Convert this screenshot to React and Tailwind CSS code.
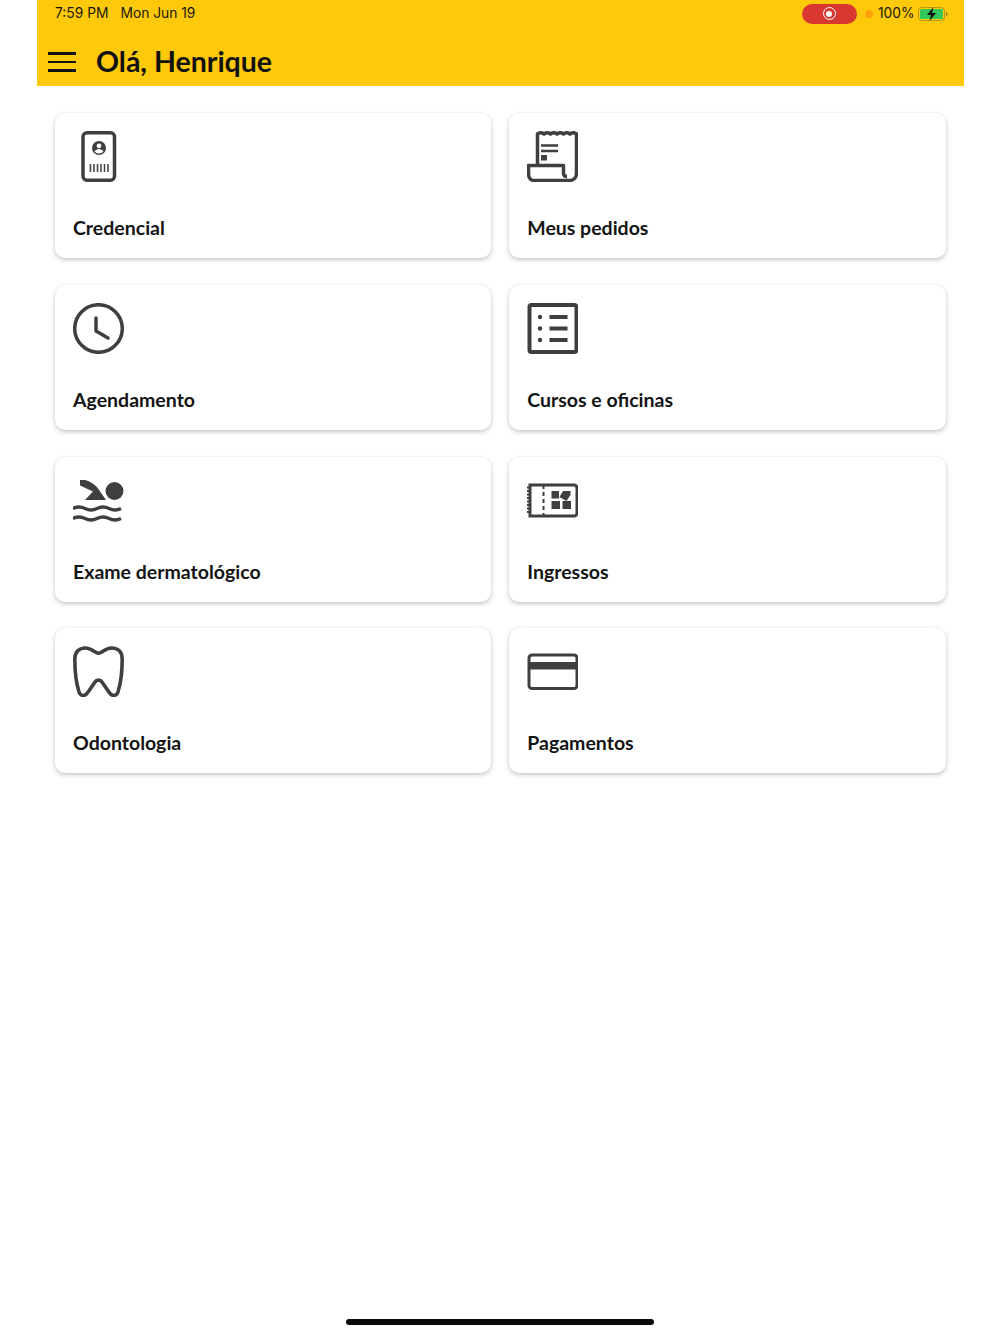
const dark = "#3f3f3f";

const Credencial = () => (
  <svg width="51" height="51" viewBox="0 0 51 51" fill="none">
    <rect x="10" y="1.750" width="31.500" height="47.500" rx="4" stroke={dark} strokeWidth="3.500" />
    <circle cx="26" cy="17" r="7" fill={dark} />
    <circle cx="26" cy="14.800" r="2.400" fill="#fff" />
    <path d="M21.500 20.800c1-2 2.600-2.800 4.500-2.800s3.500 .8 4.500 2.800a7 7 0 0 1-9 0z" fill="#fff" />
    <path d="M17.500 33v8M21 33v8M24.500 33v8M28 33v8M31.500 33v8M35 33v8" stroke={dark} strokeWidth="1.500" />
  </svg>
);

const Pedidos = () => (
  <svg width="51" height="51" viewBox="0 0 51 51" fill="none">
    <path d="M10.500 33V3q3.250-2.500 6.500 0q3.250-2.500 6.500 0q3.250-2.500 6.500 0q3.250-2.500 6.500 0q3.250-2.500 6.500 0q3.250-2.500 6.500 0V42c0 5-3 7.500-7 7.500H7c-4 0-5.500-3.500-5.500-7V34.500H36.500V42c0 2 1 3.500 3.500 3.500" stroke={dark} strokeWidth="3.500" strokeLinejoin="round" />
    <path d="M14 14.500H31M14 20H31" stroke={dark} strokeWidth="2.500" />
    <rect x="14" y="24" width="6" height="5.500" fill={dark} />
  </svg>
);

const Clock = () => (
  <svg width="51" height="51" viewBox="0 0 51 51" fill="none">
    <circle cx="25.500" cy="25.500" r="23.800" stroke={dark} strokeWidth="3.500" />
    <path d="M23 15V28L35 35" stroke={dark} strokeWidth="3.500" strokeLinecap="round" strokeLinejoin="round" />
  </svg>
);

const ListBox = () => (
  <svg width="51" height="51" viewBox="0 0 51 51" fill="none">
    <rect x="2.500" y="2" width="47" height="47" rx="2" stroke={dark} strokeWidth="4" />
    <circle cx="13" cy="14" r="2.200" fill={dark} />
    <circle cx="13" cy="25.500" r="2.200" fill={dark} />
    <circle cx="13" cy="37" r="2.200" fill={dark} />
    <path d="M22.500 14H40.500M22.500 25.500H40.500M22.500 37H40.500" stroke={dark} strokeWidth="4" />
  </svg>
);

const Swim = () => (
  <svg width="51" height="51" viewBox="0 0 51 51" fill="none">
    <path d="M7 5H12Q20 7 25 13.500L33 25H12L20 16.500L7 10.500Z" fill={dark} />
    <circle cx="41.500" cy="16" r="9" fill={dark} />
    <path d="M0 33.500c4-2 8-2 12 0s8 2 12 0 8-2 12 0 8 2 12 0M0 43.500c4-2 8-2 12 0s8 2 12 0 8-2 12 0 8 2 12 0" stroke={dark} strokeWidth="3.500" />
  </svg>
);

const Ticket = () => (
  <svg width="51" height="51" viewBox="0 0 51 51" fill="none">
    <path d="M3 10H47a3 3 0 0 1 3 3V38a3 3 0 0 1-3 3H3Z" stroke={dark} strokeWidth="3" />
    <path d="M0 12.500H3M0 16H3M0 19.500H3M0 23H3M0 26.500H3M0 30H3M0 33.500H3M0 37H3" stroke={dark} strokeWidth="1.800" />
    <path d="M16.500 10V41" stroke={dark} strokeWidth="2" strokeDasharray="4 3" />
    <rect x="24.500" y="16" width="7.500" height="7.500" fill={dark} />
    <path d="M36 16H43.500V20L39.500 26L32.500 22Z" fill={dark} />
    <rect x="24.500" y="26" width="8.500" height="8" fill={dark} />
    <rect x="35.500" y="26" width="8.500" height="8" fill={dark} />
  </svg>
);

const Tooth = () => (
  <svg width="51" height="51" viewBox="0 0 51 51" fill="none">
    <path d="M25.500 7.300C22 7.300 19 2 12.500 2 5.500 2 1.800 6.500 1.800 13 1.800 23 3.500 38 6 46c.8 2.800 2.700 3.500 4.300 3.500 2.200 0 3.500-1.500 5-3.800L22 36c1.500-2.500 5.500-2.500 7 0l6.700 9.700c1.500 2.300 2.800 3.800 5 3.800 1.600 0 3.500-.7 4.300-3.500 2.500-8 4.200-23 4.200-33 0-6.500-3.700-11-10.700-11C32 2 29 7.300 25.500 7.300Z" stroke={dark} strokeWidth="3.600" />
  </svg>
);

const CardIcon = () => (
  <svg width="51" height="51" viewBox="0 0 51 51" fill="none">
    <rect x="2" y="9" width="48" height="33.500" rx="3" stroke={dark} strokeWidth="3" />
    <rect x="1" y="16" width="50" height="7.500" fill={dark} />
  </svg>
);

const items = [
  ["Credencial", Credencial],
  ["Meus pedidos", Pedidos],
  ["Agendamento", Clock],
  ["Cursos e oficinas", ListBox],
  ["Exame dermatológico", Swim],
  ["Ingressos", Ticket],
  ["Odontologia", Tooth],
  ["Pagamentos", CardIcon],
];

export default function App() {
  return (
    <div className="flex h-[1334px] flex-col bg-white font-['Lato',sans-serif] text-[#111]">
      <div className="ml-[37px] mr-[36.500px] flex-1">
        <header className="flex h-[86px] flex-col bg-[#ffc90b] pl-[11px] pr-[16px]">
          <div className="flex h-[27px] items-center justify-between font-['Inter',sans-serif] text-[13.800px] text-[#1a1a0a]">
            <div className="flex gap-[12px] pl-[7px]">
              <span>7:59 PM</span>
              <span>Mon Jun 19</span>
            </div>
            <div className="flex items-center">
              <div className="flex h-[20px] w-[55px] items-center justify-center rounded-full bg-[#d93831]">
                <div className="flex h-[13px] w-[13px] items-center justify-center rounded-full border-[1.500px] border-white">
                  <div className="h-[6px] w-[6px] rounded-full bg-white" />
                </div>
              </div>
              <div className="ml-[8px] h-[8px] w-[8px] rounded-full bg-[#ff9f0a]" />
              <span className="ml-[5px]">100%</span>
              <svg className="ml-[3px]" width="30" height="14" viewBox="0 0 30 14" fill="none">
                <rect x="0.500" y="0.500" width="26" height="13" rx="3" fill="none" stroke="#b89a10" />
                <rect x="2" y="2" width="23" height="10" rx="1.500" fill="#34c759" />
                <path d="M28 5v4c1 0 1.500-1 1.500-2S29 5 28 5Z" fill="#8a7a10" />
                <path d="M15.500 0 9 8h4l-1.500 6L18 6h-4Z" fill="#111" />
              </svg>
            </div>
          </div>
          <div className="mt-[15px] flex items-center gap-[20px]">
            <div className="flex w-[28px] flex-col gap-[6px] pt-[2px]">
              <div className="h-[2.500px] bg-[#111]" />
              <div className="h-[2.500px] bg-[#111]" />
              <div className="h-[2.500px] bg-[#111]" />
            </div>
            <h1 className="text-[28.500px] font-bold leading-[38px]">Olá, Henrique</h1>
          </div>
        </header>
        <main className="grid grid-cols-2 gap-x-[18px] gap-y-[26.750px] px-[18px] pt-[27px]">
          {items.map(([label, Icon]) => (
            <div key={label} className="flex h-[145px] flex-col rounded-[10px] bg-white pl-[18px] pt-[18px] shadow-[0_2px_5px_rgba(0,0,0,0.22),0_0_2px_rgba(0,0,0,0.06)]">
              <Icon />
              <span className="mt-[32px] text-[19.500px] font-bold leading-[28px] text-[#141414]">{label}</span>
            </div>
          ))}
        </main>
      </div>
      <div className="mx-auto mb-[9px] h-[6px] w-[308px] rounded-full bg-[#0a0a0a]" />
    </div>
  );
}
